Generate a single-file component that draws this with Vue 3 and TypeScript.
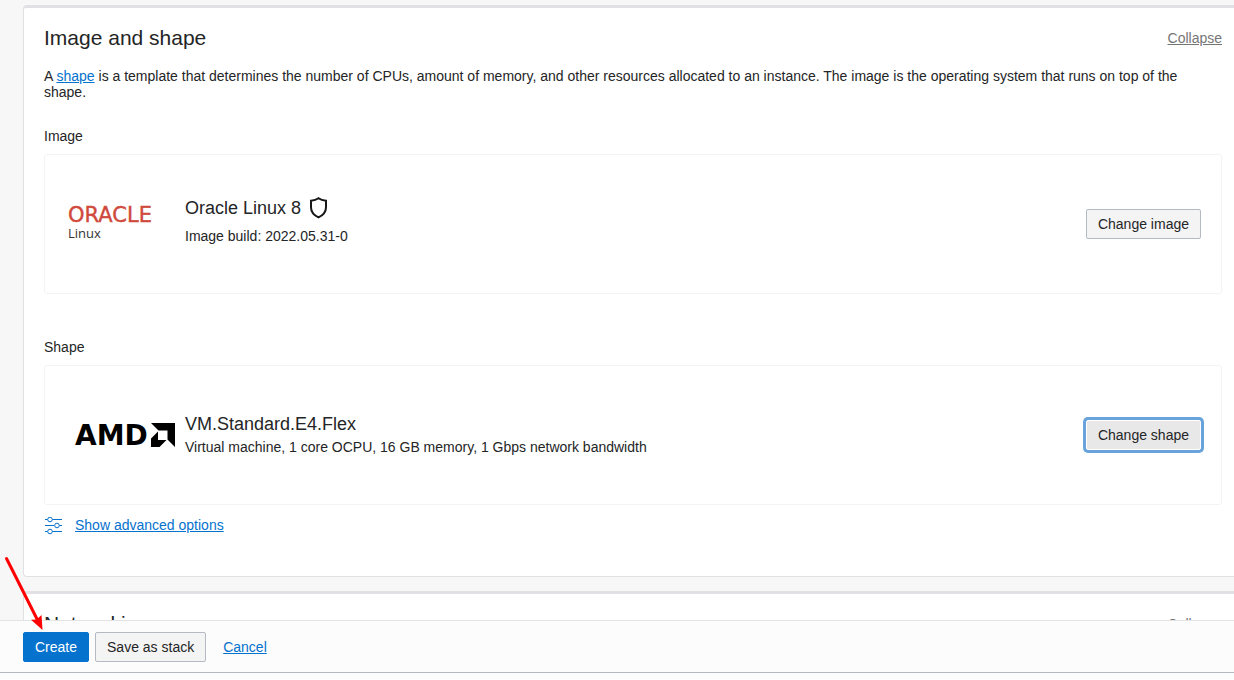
<script setup lang="ts">
import { ref } from 'vue'

const image = ref({ name: 'Oracle Linux 8', detail: 'Image build: 2022.05.31-0' })
const shape = ref({
  name: 'VM.Standard.E4.Flex',
  detail: 'Virtual machine, 1 core OCPU, 16 GB memory, 1 Gbps network bandwidth',
})
</script>

<template>
  <div class="page">
    <main class="content">
      <section class="panel main-panel">
        <header class="panel-head">
          <h2>Image and shape</h2>
          <a href="#" class="collapse">Collapse</a>
        </header>
        <p class="intro">
          A <a href="#">shape</a> is a template that determines the number of CPUs, amount of memory, and other resources allocated to an instance. The image is the operating system that runs on top of the shape.
        </p>

        <h3>Image</h3>
        <div class="card">
          <svg class="logo" width="117" height="40" viewBox="0 0 117 40" role="img" aria-label="Oracle Linux">
            <text class="oracle" x="0" y="18">ORACLE</text>
            <text class="linux" x="0" y="34">Linux</text>
          </svg>
          <div class="info image-info">
            <div class="name">
              {{ image.name }}
              <svg class="shield" width="20" height="22" viewBox="0 0 20 22" aria-hidden="true">
                <path d="M9.500 1.200C7.500 2.700 5 3.500 2 3.700v6.500c0 4.600 2.800 7.900 7.500 10.200 4.700-2.300 7.500-5.600 7.500-10.200V3.700c-3-.2-5.500-1-7.500-2.500Z" />
              </svg>
            </div>
            <div class="detail">{{ image.detail }}</div>
          </div>
          <button type="button" class="btn">Change image</button>
        </div>

        <h3 class="shape-title">Shape</h3>
        <div class="card">
          <svg class="logo" width="117" height="40" viewBox="0 0 117 40" role="img" aria-label="AMD">
            <text class="amd" x="7" y="30">AMD</text>
            <path d="M83 8h24v24l-7.500-7.500v-9h-9ZM90 16.500V25h8.500L91.500 32H83v-8.500Z" />
          </svg>
          <div class="info">
            <div class="name">{{ shape.name }}</div>
            <div class="detail">{{ shape.detail }}</div>
          </div>
          <button type="button" class="btn focused">Change shape</button>
        </div>

        <div class="advanced">
          <svg width="19" height="18" viewBox="0 0 19 18" aria-hidden="true">
            <path d="M1 2.500h2.500m5 0H18M1 8.500h9m5.500 0H18M1 14.500h2.500m5 0H18" />
            <circle cx="6" cy="2.500" r="2.300" />
            <circle cx="13" cy="8.500" r="2.300" />
            <circle cx="6" cy="14.500" r="2.300" />
          </svg>
          <a href="#">Show advanced options</a>
        </div>
      </section>

      <section class="panel">
        <header class="panel-head">
          <h2>Networking</h2>
          <a href="#" class="collapse">Collapse</a>
        </header>
      </section>
    </main>

    <footer class="actions">
      <button type="button" class="btn primary">Create</button>
      <button type="button" class="btn">Save as stack</button>
      <a href="#" class="cancel">Cancel</a>
    </footer>

    <svg class="pointer" width="50" height="80" viewBox="0 0 50 80" aria-hidden="true">
      <path class="shaft" d="M6.500 8.500 38 71" />
      <path class="tip" d="M42.500 80 31 69.700l5.500-.2 5-4.500Z" />
    </svg>
  </div>
</template>

<style>
body {
  margin: 0;
}
</style>

<style scoped>
* {
  box-sizing: border-box;
}

.page {
  position: relative;
  display: flex;
  flex-direction: column;
  height: 100vh;
  background: #f7f7f7;
  color: #242526;
  font: 14px/16px "Liberation Sans", Arial, sans-serif;
}

.content {
  flex: 1;
  min-height: 0;
  overflow: hidden;
  display: flex;
  flex-direction: column;
  gap: 14px;
  padding: 5px 0 0 23px;
}

.panel {
  flex: none;
  padding: 16px 12px 41px 20px;
  background: #fff;
  border: 1px solid #e1e1e5;
  border-top-width: 3px;
  border-right: 0;
  border-radius: 4px 0 0 4px;
}

.panel-head {
  display: flex;
  justify-content: space-between;
  align-items: center;
}

h2,
h3,
p {
  margin: 0;
  font-weight: 400;
}

h2 {
  font-size: 21px;
  line-height: 28px;
}

h3 {
  margin: 28px 0 10px;
  font-size: 14px;
  line-height: 16px;
}

h3.shape-title {
  margin-top: 45px;
}

a {
  color: #0572ce;
  text-decoration: underline;
}

a.collapse {
  color: #757575;
}

.intro {
  margin-top: 16px;
}

.card {
  display: flex;
  align-items: center;
  height: 140px;
  padding: 0 20px 0 23px;
  border: 1px solid #f4f4f5;
  border-radius: 3px;
}

.logo {
  flex: none;
}

.oracle {
  font: 21px "DejaVu Sans", sans-serif;
  fill: #d04a3c;
  stroke: #d04a3c;
  stroke-width: 0.4;
}

.linux {
  font: 13px "Open Sans", sans-serif;
  fill: #333;
}

.amd {
  font: bold 28px "DejaVu Sans", sans-serif;
}

.info {
  flex: 1;
  padding-bottom: 2px;
}

.image-info {
  padding-bottom: 8px;
}

.name {
  display: flex;
  align-items: center;
  gap: 8px;
  margin-bottom: 4px;
  font-size: 18px;
  line-height: 22px;
}

.image-info .name {
  margin-bottom: 9px;
}

.shield {
  fill: none;
  stroke: #161616;
  stroke-width: 2;
}

.btn {
  height: 30px;
  padding: 0 11px;
  border: 1px solid #b5b9c3;
  border-radius: 2px;
  background: #f4f4f4;
  color: #242526;
  font: inherit;
}

.btn.focused {
  border-color: #fff;
  background: #e8e8e8;
  box-shadow: 0 0 0 3px #68a3db;
}

.btn.primary {
  border-color: #0572ce;
  background: #0572ce;
  color: #fff;
}

.advanced {
  display: flex;
  align-items: flex-start;
  gap: 12px;
  margin-top: 12px;
}

.advanced svg {
  fill: none;
  stroke: #0572ce;
}

.actions {
  flex: none;
  display: flex;
  align-items: center;
  gap: 6px;
  height: 53px;
  margin-bottom: 7px;
  padding-left: 23px;
  border-top: 1px solid #e3e3e6;
  border-bottom: 1px solid #b4b8c3;
  background: #fcfcfc;
  box-shadow: 0 7px #fcfcfd;
}

.cancel {
  margin-left: 11px;
}

.pointer {
  position: absolute;
  left: 0;
  top: 550px;
}

.shaft {
  fill: none;
  stroke: #f00;
  stroke-width: 3;
  stroke-linecap: round;
}

.tip {
  fill: #f00;
}
</style>
